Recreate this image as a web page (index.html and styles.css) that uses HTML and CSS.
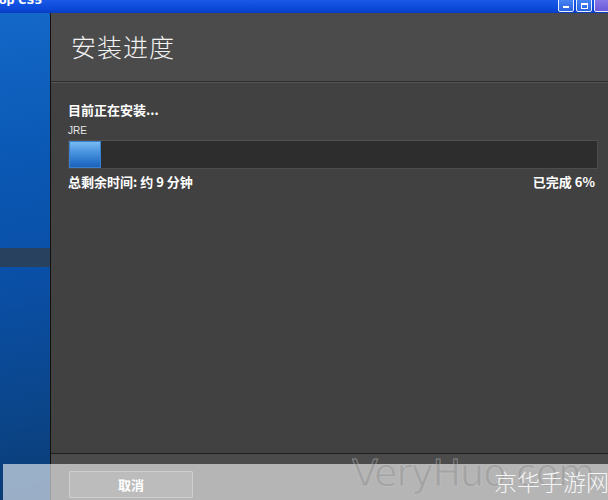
FILE: index.html
```html
<!DOCTYPE html>
<html lang="zh-CN">
<head>
    <meta charset="UTF-8">
    <title>安装进度</title>
    <link rel="stylesheet" href="styles.css">
</head>
<body>

<div class="titlebar">
    <span class="title-text">op CS5</span>
    <div class="win-buttons">
        <div class="win-btn min"><span></span></div>
        <div class="win-btn max"><span></span></div>
        <div class="win-btn close"></div>
    </div>
</div>

<div class="window">
    <div class="sidebar">
        <div class="side-band"></div>
    </div>

    <div class="main">
        <div class="header">
            <h1>安装进度</h1>
        </div>

        <div class="content">
            <div class="status">目前正在安装...</div>
            <div class="item">JRE</div>
            <div class="progress">
                <div class="progress-fill" style="width: 6%"></div>
            </div>
            <div class="info-row">
                <span>总剩余时间: 约 9 分钟</span>
                <span>已完成 6%</span>
            </div>
        </div>

        <div class="footer">
            <button class="cancel">取消</button>
        </div>
    </div>
</div>

<!-- watermark band across the bottom -->
<div class="watermark-band"></div>
<div class="watermark-site">VeryHuo.com</div>
<div class="watermark-name">京华手游网</div>

</body>
</html>
```

FILE: styles.css
```css
html, body {
    margin: 0;
    padding: 0;
}
body {
    width: 608px;
    height: 500px;
    overflow: hidden;
    position: relative;
    background: #414141;
    font-family: "Noto Sans CJK SC", "Liberation Sans", sans-serif;
    color: #fff;
}
.titlebar {
    height: 13px;
    display: flex;
    justify-content: space-between;
    overflow: hidden;
    background: linear-gradient(#1a5ae8, #0a48d8 70%, #083cc0);
}
.title-text {
    font-family: "DejaVu Sans", sans-serif;
    font-weight: bold;
    font-size: 11px;
    line-height: 11px;
    margin-top: -5px;
    margin-left: -1px;
    white-space: nowrap;
}
.win-buttons {
    display: flex;
    gap: 2px;
    margin-right: -2px;
}
.win-btn {
    width: 16px;
    height: 14px;
    margin-top: -2px;
    box-sizing: border-box;
    border: 1px solid #e8eefc;
    border-radius: 2px;
    background: linear-gradient(#4a86f4, #2a62e0);
    position: relative;
}
.win-btn.min span {
    position: absolute;
    left: 4px;
    bottom: 3px;
    width: 6px;
    height: 2px;
    background: #fff;
}
.win-btn.max span {
    position: absolute;
    left: 4px;
    top: 4px;
    width: 7px;
    height: 6px;
    border: 1px solid #fff;
    border-top-width: 2px;
    box-sizing: border-box;
}
.win-btn.close {
    background: linear-gradient(#8a7ae8, #6a5ad8);
}
.window {
    display: flex;
    height: 487px;
}
.sidebar {
    width: 50px;
    border-right: 1px solid #111;
    background: linear-gradient(170deg, #1468c8 0%, #0a58b4 30%, #0a4fa6 55%, #0b4486 85%, #0a3a74 100%);
    position: relative;
}
.side-band {
    position: absolute;
    left: 0;
    right: 0;
    top: 235px;
    height: 19px;
    background: #27415f;
}
.main {
    flex: 1;
    display: flex;
    flex-direction: column;
}
.header {
    height: 68px;
    background: #4b4b4b;
    border-bottom: 1px solid #2c2c2c;
    box-shadow: 0 1px 0 #555;
    padding-left: 20px;
}
.header h1 {
    margin: 0;
    padding-top: 17px;
    font-weight: 300;
    font-size: 25px;
    line-height: 32px;
    color: #f2f2f2;
    letter-spacing: 1px;
}
.content {
    flex: 1;
    padding: 19px 10px 0 17px;
    border-bottom: 1px solid #1e1e1e;
}
.status {
    font-weight: bold;
    font-size: 13px;
    line-height: 17px;
}
.item {
    font-family: "Liberation Sans", sans-serif;
    font-size: 10px;
    line-height: 12px;
    margin-top: 7px;
    color: #e8e8e8;
}
.progress {
    margin-top: 3px;
    height: 27px;
    background: #2d2d2d;
    border: 1px solid #4c4c4c;
    border-top-color: #505050;
}
.progress-fill {
    height: 100%;
    background: linear-gradient(#7cbdf2, #4b95e0 40%, #2670c8 80%, #1d5eb0);
    box-shadow: inset 0 0 0 1px #3a80d0;
}
.info-row {
    display: flex;
    justify-content: space-between;
    margin-top: 4px;
    padding-right: 3px;
    font-weight: bold;
    font-size: 13px;
    line-height: 17px;
}
.footer {
    height: 46px;
    background: #4b4b4b;
    padding: 17px 0 0 18px;
    box-sizing: border-box;
}
.cancel {
    width: 124px;
    height: 27px;
    background: #5e5e5e;
    border: 1px solid #8a8a8a;
    border-radius: 1px;
    color: #fff;
    font-family: "Noto Sans CJK SC", sans-serif;
    font-weight: bold;
    font-size: 13px;
    padding: 0;
}
.watermark-band {
    position: absolute;
    left: 3px;
    right: 0;
    top: 464px;
    bottom: 0;
    background: rgba(255, 255, 255, 0.59);
}
.watermark-site {
    position: absolute;
    left: 352px;
    top: 450px;
    font-family: "DejaVu Sans", sans-serif;
    font-size: 38px;
    line-height: 46px;
    letter-spacing: -1px;
    white-space: nowrap;
    color: rgba(90, 90, 90, 0.2);
    -webkit-text-stroke: 1px rgba(200, 200, 200, 0.45);
}
.watermark-name {
    position: absolute;
    left: 494px;
    top: 466px;
    font-weight: 300;
    font-size: 23px;
    line-height: 30px;
    white-space: nowrap;
    color: #f4f4f4;
}
```
